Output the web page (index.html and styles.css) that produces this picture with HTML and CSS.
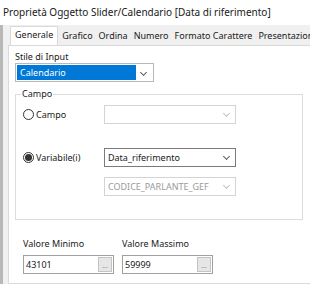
FILE: index.html
```html
<!DOCTYPE html>
<html lang="it">
<head>
    <meta charset="UTF-8">
    <title>Proprietà Oggetto Slider/Calendario</title>
    <link rel="stylesheet" href="styles.css">
</head>
<body>
    <div class="title">Proprietà Oggetto Slider/Calendario [Data di riferimento]</div>
    <div class="dialog">
        <ul class="tabs">
            <li class="tab selected">Generale</li>
            <li class="tab">Grafico</li>
            <li class="tab">Ordina</li>
            <li class="tab">Numero</li>
            <li class="tab">Formato Carattere</li>
            <li class="tab">Presentazione</li>
        </ul>
        <div class="panel">
            <div class="label">Stile di Input</div>
            <div class="combo style-combo">
                <span class="combo-value highlight">Calendario</span>
                <span class="chevron"></span>
            </div>

            <fieldset class="group">
                <legend>Campo</legend>
                <div class="row first">
                    <span class="radio"><span class="dot"></span>Campo</span>
                    <div class="combo disabled"><span class="combo-value"></span><span class="chevron"></span></div>
                </div>
                <div class="row second">
                    <span class="radio checked"><span class="dot"></span>Variabile(i)</span>
                    <div class="combo dark"><span class="combo-value">Data_riferimento</span><span class="chevron"></span></div>
                </div>
                <div class="row third">
                    <span class="radio-space"></span>
                    <div class="combo disabled"><span class="combo-value">CODICE_PARLANTE_GEF</span><span class="chevron"></span></div>
                </div>
            </fieldset>

            <div class="limits">
                <div class="limit">
                    <div class="label">Valore Minimo</div>
                    <div class="input"><span class="input-value">43101</span><span class="dots">...</span></div>
                </div>
                <div class="limit">
                    <div class="label">Valore Massimo</div>
                    <div class="input"><span class="input-value">59999</span><span class="dots">...</span></div>
                </div>
            </div>
        </div>
    </div>
</body>
</html>
```

FILE: styles.css
```css
*{
    margin: 0;
    padding: 0;
    box-sizing: border-box;
}
ul{
    list-style: none;
}
body{
    width: 310px;
    height: 284px;
    overflow: hidden;
    font-family: "Noto Sans", sans-serif;
    font-size: 9px;
    color: #1a1a1a;
    background: #ffffff;
}
.title{
    height: 25px;
    line-height: 24px;
    padding-left: 3px;
    font-size: 10px;
    white-space: nowrap;
    color: #202020;
}
.dialog{
    height: 259px;
    display: flex;
    flex-direction: column;
    background: #f0f0f0;
    border-left: 3px solid #b8b8b8;
    padding-left: 5px;
}
.tabs{
    display: flex;
    align-items: flex-end;
    height: 20px;
    padding-left: 2px;
    white-space: nowrap;
    overflow: hidden;
}
.tab{
    height: 17px;
    line-height: 16px;
    padding: 0 3px;
    color: #202020;
}
.tab.selected{
    height: 19px;
    padding: 0 4px;
    margin-right: 1px;
    background: #ffffff;
    border: 1px solid #d9d9d9;
    border-bottom: none;
    position: relative;
    z-index: 1;
}
.panel{
    flex: 1;
    background: #ffffff;
    border: 1px solid #d9d9d9;
    border-right: none;
    padding: 5px 0 0 6px;
}
.label{
    height: 12px;
    line-height: 12px;
}
.combo{
    display: flex;
    align-items: center;
    height: 19px;
    border: 1px solid #b8b8b8;
    background: #ffffff;
}
.combo-value{
    flex: 1;
    height: 100%;
    line-height: 17px;
    padding-left: 3px;
    white-space: nowrap;
    overflow: hidden;
}
.chevron{
    width: 16px;
    height: 100%;
    position: relative;
}
.chevron::after{
    content: "";
    position: absolute;
    left: 5px;
    top: 5px;
    width: 4px;
    height: 4px;
    border-right: 1px solid #606060;
    border-bottom: 1px solid #606060;
    transform: rotate(45deg);
}
.style-combo{
    width: 139px;
    padding: 1px;
}
.highlight{
    background: #0078d7;
    color: #ffffff;
    line-height: 15px;
}
.combo.dark{
    border-color: #7a7a7a;
}
.combo.disabled{
    border-color: #d4d4d4;
    color: #9a9a9a;
}
.combo.disabled .chevron::after{
    border-color: #c0c0c0;
}
.group{
    width: 288px;
    margin-top: 6px;
    border: 1px solid #dcdcdc;
    padding: 0 0 23px 7px;
}
.group legend{
    padding: 0 1px;
    margin-left: -2px;
    line-height: 12px;
}
.row{
    display: grid;
    grid-template-columns: 81px 132px;
    align-items: center;
}
.row.first{
    margin-top: 5px;
}
.row.second{
    margin-top: 24px;
}
.row.third{
    margin-top: 10px;
}
.radio{
    display: flex;
    align-items: center;
    gap: 2px;
}
.dot{
    width: 11px;
    height: 11px;
    border: 1px solid #333333;
    border-radius: 50%;
    display: flex;
    align-items: center;
    justify-content: center;
}
.checked .dot::after{
    content: "";
    width: 7px;
    height: 7px;
    border-radius: 50%;
    background: #333333;
}
.limits{
    display: flex;
    gap: 8px;
    margin-top: 18px;
    padding-left: 8px;
}
.limit .label{
    margin-bottom: 5px;
}
.input{
    display: flex;
    align-items: center;
    width: 91px;
    height: 19px;
    border: 1px solid #a0a0a0;
    padding-right: 1px;
}
.input-value{
    flex: 1;
    padding-left: 2px;
}
.dots{
    width: 14px;
    height: 15px;
    border: 1px solid #c4c4c4;
    background: #e6e6e6;
    color: #8a8a8a;
    font-size: 7px;
    line-height: 16px;
    text-align: center;
}
```
